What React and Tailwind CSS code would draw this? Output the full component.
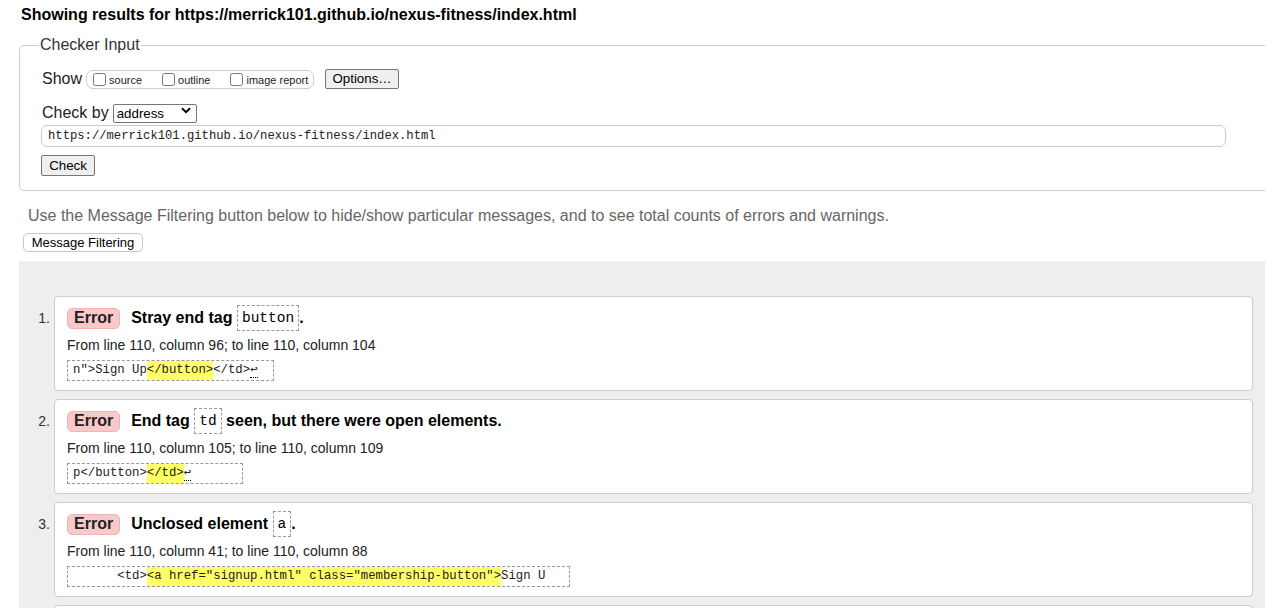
import React from "react";

const sans = { fontFamily: '"Liberation Sans", Arial, sans-serif' };
const mono = { fontFamily: '"Liberation Mono", "DejaVu Sans Mono", monospace' };

function Code({ children, className = "" }) {
  return (
    <span
      className={"inline-block border border-dashed border-[#999] bg-white text-[14.5px] leading-[20px] px-[4px] py-[2px] font-normal " + className}
      style={mono}
    >
      {children}
    </span>
  );
}

function Extract({ before, hl, after, width }) {
  return (
    <div
      className="mt-[5px] h-[21px] border border-dashed border-[#999] flex items-center pl-[5px] text-[12.3px] whitespace-pre text-[#222] overflow-hidden"
      style={{ ...mono, width }}
    >
      <span>{before}</span>
      <span className="bg-[#ffff66]">{hl}</span>
      <span>{after}</span>
    </div>
  );
}

function Card({ n, msg, from, extract, first }) {
  return (
    <div className={"flex " + (first ? "" : "mt-[8px]")}>
      <div className="w-[35px] pt-[14px] text-right pr-[4px] text-[14px] leading-[16px] text-[#333]">{n}.</div>
      <div className="flex-1 mr-[12px] bg-white border border-[#ccc] rounded-[4px] pl-[12px] pt-[8px] pb-[9px]">
        <div className="h-[26px] flex items-center">
          <span className="h-[21px] flex items-center px-[6px] bg-[#f9c9c9] border border-[#efb5b5] rounded-[5px] text-[16px] font-bold text-[#222]">
            Error
          </span>
          <span className="ml-[11px] text-[16px] font-bold text-black flex items-center">{msg}</span>
        </div>
        <div className="mt-[4px] h-[20px] flex items-center text-[14px] text-[#222]">{from}</div>
        {extract}
      </div>
    </div>
  );
}

function Chevron() {
  return (
    <svg width="10" height="7" viewBox="0 0 10 7" className="absolute right-[6px] top-[6px] pointer-events-none">
      <path d="M1 1.2 L5 5.2 L9 1.2" stroke="#000" strokeWidth="2" fill="none" />
    </svg>
  );
}

export default function App() {
  return (
    <div className="w-[1265px] h-[608px] overflow-hidden bg-white text-black" style={sans}>
      <h2 className="pl-[21px] pt-[6px] h-[18px] text-[16px] leading-[18px] font-bold text-black whitespace-nowrap">
        Showing results for https://merrick101.github.io/nexus-fitness/index.html
      </h2>

      <fieldset className="ml-[19px] mt-[18px] w-[1265px] border border-[#ccc] rounded-[5px] pl-[22px] pr-[0px] pt-[14px] pb-[14px]">
        <legend className="ml-[-3px] px-[1px] text-[16px] leading-[18px] text-[#333]">Checker Input</legend>

        <div className="h-[22px] flex items-center">
          <span className="text-[16px] text-[#222]">Show</span>
          <div className="ml-[4px] h-[19px] w-[228px] border border-[#ccc] rounded-[7px] flex items-center pl-[6px] text-[11px] text-[#222]">
            <input type="checkbox" className="m-0 w-[13px] h-[13px]" />
            <span className="ml-[3px] mt-[2px]">source</span>
            <input type="checkbox" className="ml-[20px] w-[13px] h-[13px]" />
            <span className="ml-[3px] mt-[2px]">outline</span>
            <input type="checkbox" className="ml-[20px] w-[13px] h-[13px]" />
            <span className="ml-[3px] mt-[2px]">image report</span>
          </div>
          <button className="ml-[11px] h-[20px] w-[74px] bg-[#efefef] border border-[#767676] rounded-[2px] text-[13.3px] text-black flex items-center justify-center">
            Options…
          </button>
        </div>

        <div className="mt-[12px] h-[22px] flex items-center">
          <span className="text-[16px] text-[#222]">Check by</span>
          <div className="relative ml-[4px]">
            <select
              className="appearance-none h-[19px] w-[84px] border border-[#767676] rounded-[2px] bg-white text-[13.3px] text-black pl-[3px] leading-[17px]"
              defaultValue="address"
            >
              <option value="address">address</option>
            </select>
            <Chevron />
          </div>
        </div>

        <div
          className="mt-[1px] ml-[-1px] h-[22px] w-[1185px] border border-[#ccc] rounded-[6px] flex items-center pl-[6px] text-[12.2px] text-[#222]"
          style={mono}
        >
          https://merrick101.github.io/nexus-fitness/index.html
        </div>

        <button className="mt-[8px] ml-[-1px] h-[21px] w-[54px] bg-[#efefef] border border-[#767676] rounded-[2px] text-[13.3px] text-black flex items-center justify-center">
          Check
        </button>
      </fieldset>

      <p className="ml-[28px] mt-[16px] h-[18px] text-[16px] leading-[18px] text-[#666] whitespace-nowrap">
        Use the Message Filtering button below to hide/show particular messages, and to see total counts of errors and warnings.
      </p>

      <button className="ml-[23px] mt-[8px] h-[19px] w-[120px] bg-white border border-[#c8c8c8] rounded-[5px] text-[13px] text-black flex items-center justify-center">
        Message Filtering
      </button>

      <div className="ml-[19px] mt-[9px] bg-[#eeeeee] h-[400px] pt-[35px]">
        <Card
          first
          n={1}
          msg={
            <>
              Stray end tag&nbsp;<Code>button</Code>.
            </>
          }
          from="From line 110, column 96; to line 110, column 104"
          extract={
            <Extract
              width="207px"
              before={'n">Sign Up'}
              hl="</button>"
              after={
                <>
                  {"</td>"}
                  <span className="border-b border-dotted border-black">↩</span>
                </>
              }
            />
          }
        />
        <Card
          n={2}
          msg={
            <>
              End tag&nbsp;<Code>td</Code>&nbsp;seen, but there were open elements.
            </>
          }
          from="From line 110, column 105; to line 110, column 109"
          extract={
            <Extract
              width="176px"
              before="p</button>"
              hl="</td>"
              after={<span className="border-b border-dotted border-black">↩</span>}
            />
          }
        />
        <Card
          n={3}
          msg={
            <>
              Unclosed element&nbsp;<Code>a</Code>.
            </>
          }
          from="From line 110, column 41; to line 110, column 88"
          extract={
            <Extract
              width="503px"
              before="      <td>"
              hl={'<a href="signup.html" class="membership-button">'}
              after="Sign U"
            />
          }
        />
        <div className="flex mt-[8px]">
          <div className="w-[35px]" />
          <div className="flex-1 mr-[12px] h-[95px] bg-white border border-[#ccc] rounded-[4px]" />
        </div>
      </div>
    </div>
  );
}
